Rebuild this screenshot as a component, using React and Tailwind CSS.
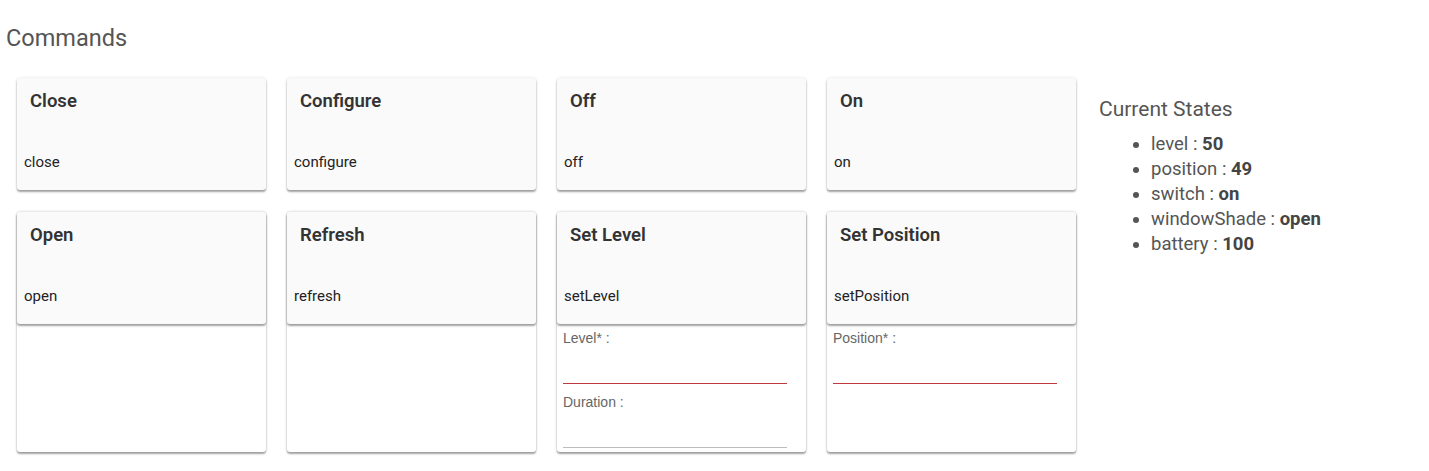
import React from "react";

const commands = [
  { title: "Close", name: "close" },
  { title: "Configure", name: "configure" },
  { title: "Off", name: "off" },
  { title: "On", name: "on" },
  { title: "Open", name: "open", body: [] },
  { title: "Refresh", name: "refresh", body: [] },
  { title: "Set Level", name: "setLevel", body: [{ label: "Level* :", required: true }, { label: "Duration :" }] },
  { title: "Set Position", name: "setPosition", body: [{ label: "Position* :", required: true }] },
];

const states = [
  ["level", "50"],
  ["position", "49"],
  ["switch", "on"],
  ["windowShade", "open"],
  ["battery", "100"],
];

const shadow = "shadow-[0_2px_2px_rgba(0,0,0,0.35),0_0_3px_rgba(0,0,0,0.12)]";

function Header({ title, name }) {
  return (
    <div className={`h-[112px] bg-[#fafafa] rounded-[3px] ${shadow} flex flex-col`}>
      <div className="pl-[13px] pt-[11px] text-[18.5px] leading-6 font-semibold text-[#333]">{title}</div>
      <div className="pl-[7px] mt-[39px] text-[15px] leading-5 text-[#222]">{name}</div>
    </div>
  );
}

function Field({ label, required }) {
  return (
    <div className="pl-[6px] first:pt-[6px] mt-[10px] first:mt-0">
      <div className="text-[14px] leading-4 text-[#666] font-['Liberation_Sans',Arial,sans-serif]">{label}</div>
      <input
        className={`block w-[224px] h-[38px] outline-none bg-transparent border-b ${
          required ? "border-[#c0393f]" : "border-[#bdbdbd]"
        }`}
      />
    </div>
  );
}

function CommandCard({ cmd }) {
  if (!cmd.body) return <Header {...cmd} />;
  return (
    <div className={`h-[240px] bg-white rounded-[3px] ${shadow}`}>
      <Header {...cmd} />
      <div>
        {cmd.body.map((f) => (
          <Field key={f.label} {...f} />
        ))}
      </div>
    </div>
  );
}

export default function App() {
  return (
    <div className="min-h-screen bg-white px-[6px] pt-[24px] font-['Roboto',sans-serif]">
      <h2 className="text-[23.5px] leading-7 text-[#555]">Commands</h2>
      <div className="flex mt-[26px]">
        <div className="ml-[11px] grid grid-cols-[repeat(4,249px)] gap-x-[21px] gap-y-[22px] items-start">
          {commands.map((c) => (
            <CommandCard key={c.name} cmd={c} />
          ))}
        </div>
        <div className="ml-[23px] pt-[19px] text-[#555]">
          <div className="text-[21px] leading-6">Current States</div>
          <ul className="list-disc ml-[52px] mt-[11px] text-[18.5px] leading-[25px]">
            {states.map(([k, v]) => (
              <li key={k}>
                {k} : <b className="font-bold text-[#444]">{v}</b>
              </li>
            ))}
          </ul>
        </div>
      </div>
    </div>
  );
}
